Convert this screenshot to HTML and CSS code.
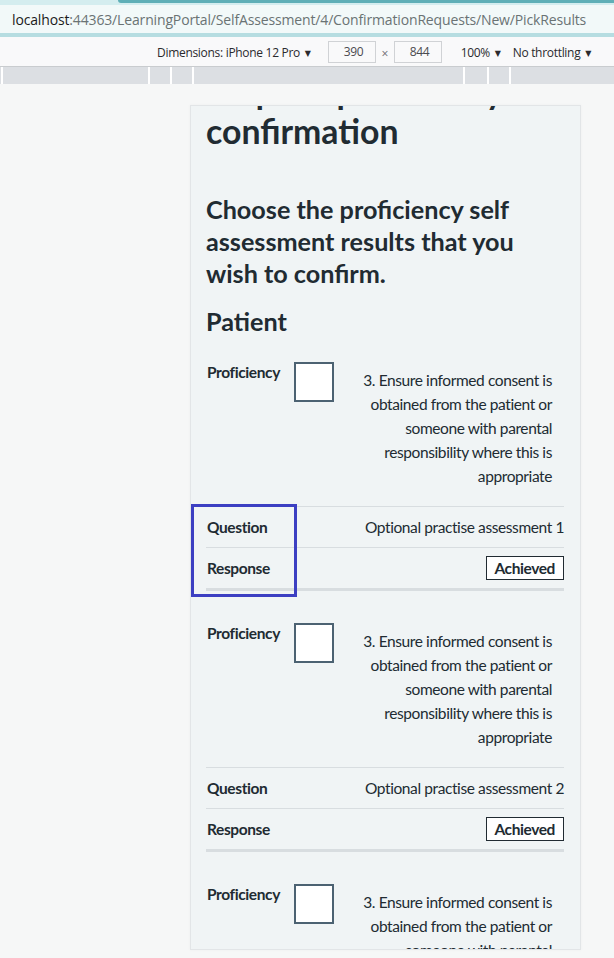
FILE: index.html
```html
<!DOCTYPE html>
<html lang="en">
<head>
<meta charset="utf-8">
<title>Pick results</title>
<link rel="stylesheet" href="styles.css">
</head>
<body>
<div class="window">
  <div class="tabstrip"><div class="tab-active"></div></div>
  <div class="urlbar"><span class="url-host">localhost</span><span class="url-path">:44363/LearningPortal/SelfAssessment/4/ConfirmationRequests/New/PickResults</span></div>
  <div class="urlbar-edge"></div>
  <div class="rdm-toolbar">
    <span class="rdm-device">Dimensions: iPhone 12 Pro <span class="caret">▼</span></span>
    <span class="rdm-input">390</span>
    <span class="rdm-times">×</span>
    <span class="rdm-input">844</span>
    <span class="rdm-select rdm-zoom">100% <span class="caret">▼</span></span>
    <span class="rdm-select">No throttling <span class="caret">▼</span></span>
  </div>
  <div class="ruler">
    <div class="seg seg-1"></div>
    <div class="seg seg-2"></div>
    <div class="seg seg-3"></div>
    <div class="seg seg-3"></div>
    <div class="seg seg-4"></div>
    <div class="seg seg-5"></div>
    <div class="seg seg-3"></div>
    <div class="seg seg-rest"></div>
  </div>
  <div class="stage">
    <div class="device">
      <main class="page">
        <h1>Request proficiency confirmation</h1>
        <h2>Choose the proficiency self assessment results that you wish to confirm.</h2>
        <h2 class="group-title">Patient</h2>

        <div class="result">
          <div class="row row-prof">
            <div class="key">Proficiency</div>
            <div class="value check">
              <span class="checkbox"></span>
              <span class="check-label">3. Ensure informed consent is obtained from the patient or someone with parental responsibility where this is appropriate</span>
            </div>
          </div>
          <div class="row">
            <div class="key">Question</div>
            <div class="value">Optional practise assessment 1</div>
          </div>
          <div class="row row-last">
            <div class="key">Response</div>
            <div class="value"><span class="tag">Achieved</span></div>
          </div>
        </div>

        <div class="result">
          <div class="row row-prof">
            <div class="key">Proficiency</div>
            <div class="value check">
              <span class="checkbox"></span>
              <span class="check-label">3. Ensure informed consent is obtained from the patient or someone with parental responsibility where this is appropriate</span>
            </div>
          </div>
          <div class="row">
            <div class="key">Question</div>
            <div class="value">Optional practise assessment 2</div>
          </div>
          <div class="row row-last">
            <div class="key">Response</div>
            <div class="value"><span class="tag">Achieved</span></div>
          </div>
        </div>

        <div class="result">
          <div class="row row-prof">
            <div class="key">Proficiency</div>
            <div class="value check">
              <span class="checkbox"></span>
              <span class="check-label">3. Ensure informed consent is obtained from the patient or someone with parental responsibility where this is appropriate</span>
            </div>
          </div>
        </div>
      </main>
      <div class="highlight"></div>
    </div>
  </div>
</div>
</body>
</html>
```

FILE: styles.css
```css
html, body {
  margin: 0;
  padding: 0;
}

body {
  width: 614px;
  height: 958px;
  overflow: hidden;
  background: #f6f7f7;
  font-family: Lato, "Liberation Sans", sans-serif;
  color: #212b32;
}

/* ---------- browser chrome ---------- */
.tabstrip {
  height: 5px;
  background: #d4edef;
  display: flex;
}

.tab-active {
  margin-left: 118px;
  flex: 1;
  height: 3px;
  background: #5fafb7;
  border-bottom-left-radius: 4px;
}

.urlbar {
  height: 28px;
  line-height: 29px;
  background: #f2f9f9;
  padding-left: 12px;
  font-family: "Open Sans", "Liberation Sans", sans-serif;
  font-size: 14px;
  letter-spacing: -0.15px;
  white-space: nowrap;
  overflow: hidden;
}

.url-host {
  color: #1b1b1b;
}

.url-path {
  color: #6a7374;
}

.urlbar-edge {
  height: 4px;
  background: #b6dde1;
}

.rdm-toolbar {
  height: 29px;
  background: #f9f9fa;
  border-bottom: 1px solid #c9cccf;
  display: flex;
  align-items: center;
  padding-left: 157px;
  padding-top: 1px;
  box-sizing: border-box;
  height: 30px;
  font-family: "Open Sans", "Liberation Sans", sans-serif;
  font-size: 12px;
  letter-spacing: -0.3px;
  color: #2a2a2e;
  white-space: nowrap;
}

.caret {
  font-family: "DejaVu Sans", sans-serif;
  font-size: 8px;
  vertical-align: 1px;
  margin-left: 2px;
}

.rdm-device {
  margin-right: 17px;
}

.rdm-input {
  box-sizing: border-box;
  width: 48px;
  height: 22px;
  line-height: 20px;
  border: 1px solid #d0d2d5;
  background: #f9f9fa;
  padding-left: 15px;
  color: #4a4a4f;
}

.rdm-times {
  width: 18px;
  text-align: center;
  color: #6a6a6f;
  font-size: 12px;
  padding-top: 3px;
}

.rdm-zoom {
  margin-left: 19px;
  margin-right: 12px;
}

.ruler {
  height: 17px;
  display: flex;
  gap: 2px;
  background: #ffffff;
}

.seg {
  background: #dcdfe3;
}

.seg-1 { width: 1px; }
.seg-2 { width: 145px; }
.seg-3 { width: 20px; }
.seg-4 { width: 269px; }
.seg-5 { width: 22px; }
.seg-rest { flex: 1; }

/* ---------- emulated device ---------- */
.stage {
  padding: 21px 0 0 190px;
}

.device {
  position: relative;
  box-sizing: border-box;
  width: 391px;
  height: 845px;
  border: 1px solid #e2e5e7;
  background: #f0f4f5;
  overflow: hidden;
  box-shadow: 0 0 3px rgba(0, 0, 0, 0.04);
}

.page {
  padding: 0 16px 0 15px;
}

h1 {
  font-size: 33.8px;
  line-height: 40px;
  font-weight: 700;
  margin: -35px 0 42px;
}

h2 {
  font-size: 25.2px;
  line-height: 32px;
  font-weight: 700;
  margin: 0 0 16px;
}

h2.group-title {
  margin-bottom: 15px;
}

.result {
  margin-bottom: 22px;
  font-size: 15.5px;
  letter-spacing: -0.4px;
  line-height: 24px;
}

.row {
  display: flex;
  justify-content: space-between;
  align-items: flex-start;
  border-bottom: 1px solid #d8dde0;
  padding: 8px 0;
}

.row-prof {
  padding: 8px 0 14px;
}

.row-last {
  border-bottom: 3px solid #d8dde0;
}

.key {
  box-sizing: border-box;
  width: 88px;
  flex: none;
  font-weight: 700;
  padding-left: 1px;
}

.value {
  flex: 1;
  text-align: right;
}

.check {
  display: flex;
  align-items: flex-start;
}

.checkbox {
  flex: none;
  box-sizing: border-box;
  width: 40px;
  height: 40px;
  margin-top: 2px;
  border: 2px solid #4c6272;
  background: #ffffff;
}

.check-label {
  flex: 1;
  padding: 8px 12px 4px;
  text-align: right;
}

.tag {
  display: inline-block;
  border: 1px solid #212b32;
  background: #ffffff;
  font-weight: 700;
  line-height: 22px;
  padding: 0 8px 0 7px;
}

.highlight {
  position: absolute;
  left: 0;
  top: 398px;
  width: 106px;
  height: 93px;
  box-sizing: border-box;
  border: 3px solid #3c3fc2;
}
```
